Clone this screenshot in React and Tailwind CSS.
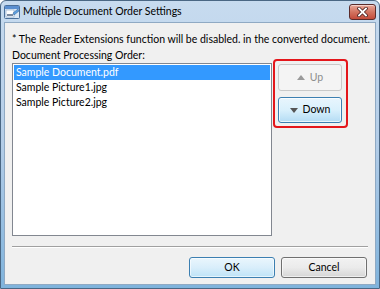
import React from "react";

const font = { fontFamily: 'Lato, "Noto Sans", sans-serif' };

function AppIcon() {
  return (
    <svg width="16" height="16" viewBox="0 0 16 16">
      <rect x="0.5" y="1.5" width="15" height="13" rx="1" fill="#dbe8f5" stroke="#4a6f9a" />
      <rect x="1" y="2" width="14" height="3" fill="#5b8fd0" />
      <rect x="2" y="6" width="8" height="7" fill="#ffffff" stroke="#7f9fc4" strokeWidth="0.6" />
      <path d="M9 9 L14 5 L15 7 L10 11 Z" fill="#5ea0e0" stroke="#2d5c95" strokeWidth="0.5" />
      <rect x="3" y="10" width="6" height="2" fill="#7a8aa0" />
    </svg>
  );
}

function CloseButton() {
  return (
    <div className="w-[27px] h-[16px] rounded-[3px] border border-[#5a2b2b] bg-gradient-to-b from-[#e9a79a] via-[#d27461] to-[#c34a3a] flex items-center justify-center shadow-[inset_0_1px_0_rgba(255,255,255,0.5)]">
      <svg width="11" height="10" viewBox="0 0 11 10">
        <path d="M2 1.5 L9 8.5 M9 1.5 L2 8.5" stroke="#4a2020" strokeWidth="3.4" strokeLinecap="square" />
        <path d="M2 1.5 L9 8.5 M9 1.5 L2 8.5" stroke="#ffffff" strokeWidth="1.8" strokeLinecap="square" />
      </svg>
    </div>
  );
}

export default function App() {
  return (
    <div
      className="w-[380px] h-[289px] flex flex-col bg-gradient-to-b from-[#c7dbef] via-[#b3cde8] to-[#7fb3dc] border border-[#4a6784] rounded-t-[6px] overflow-hidden text-[10.5px] text-black"
      style={font}
    >
      {/* Title bar */}
      <div className="h-[21px] flex items-center pl-[3px] pr-[3px]">
        <AppIcon />
        <span className="ml-[3px] text-[10.5px] leading-none text-black">Multiple Document Order Settings</span>
        <div className="ml-auto">
          <CloseButton />
        </div>
      </div>
      {/* Client area */}
      <div className="flex-1 mx-[3px] mb-[3px] bg-[#f0f0f0] border border-[#8fa9c3] flex flex-col pl-[7px] pr-[7px]">
        <div className="mt-[8px] h-[16px] leading-[16px] whitespace-nowrap">* The Reader Extensions function will be disabled. in the converted document.</div>
        <div className="h-[16px] leading-[16px]">Document Processing Order:</div>
        <div className="flex">
          <div className="w-[260px] h-[173px] bg-white border border-[#828790] p-[1px]">
            <div className="h-[15px] leading-[15px] bg-[#3399ff] text-white pl-[2px]">Sample Document.pdf</div>
            <div className="h-[15px] leading-[15px] pl-[2px]">Sample Picture1.jpg</div>
            <div className="h-[15px] leading-[15px] pl-[2px]">Sample Picture2.jpg</div>
          </div>
          <div className="relative ml-[1px] -mt-[4px] w-[75px] h-[69px] flex flex-col gap-[6px] pl-[5px] pt-[5px]">
            <div className="absolute inset-0 border-2 border-[#e4161b] rounded-[4px] pointer-events-none" />
            <div className="w-[64px] h-[27px] rounded-[3px] border border-[#c9c9c9] bg-[#f4f4f4] flex items-center justify-center gap-[5px] text-[#8d8d8d]">
              <svg width="8" height="5" viewBox="0 0 8 5"><path d="M0 5 L4 0 L8 5 Z" fill="#9a9a9a" /></svg>
              <span>Up</span>
            </div>
            <div className="w-[64px] h-[26px] rounded-[3px] border border-[#3c7fb1] bg-gradient-to-b from-[#e8f5fd] via-[#d9f0fc] to-[#b3dcf4] flex items-center justify-center gap-[5px] shadow-[inset_0_0_0_1px_rgba(255,255,255,0.7)]">
              <svg width="8" height="5" viewBox="0 0 8 5"><path d="M0 0 L8 0 L4 5 Z" fill="#555555" /></svg>
              <span>Down</span>
            </div>
          </div>
        </div>
        <div className="mt-[10px] h-[2px] border-t border-[#a0a0a0] border-b border-b-white bg-[#d5d5d5]" />
        <div className="flex justify-end gap-[6px] mt-[9px] pr-[1px]">
          <div className="w-[86px] h-[21px] rounded-[3px] border border-[#3c7fb1] bg-gradient-to-b from-[#eaf6fd] via-[#d9eefb] to-[#bee3f7] flex items-center justify-center shadow-[inset_0_0_0_1px_rgba(255,255,255,0.6)]">OK</div>
          <div className="w-[86px] h-[21px] rounded-[3px] border border-[#707070] bg-gradient-to-b from-[#f2f2f2] via-[#ebebeb] to-[#d6d6d6] flex items-center justify-center shadow-[inset_0_0_0_1px_rgba(255,255,255,0.6)]">Cancel</div>
        </div>
      </div>
    </div>
  );
}
